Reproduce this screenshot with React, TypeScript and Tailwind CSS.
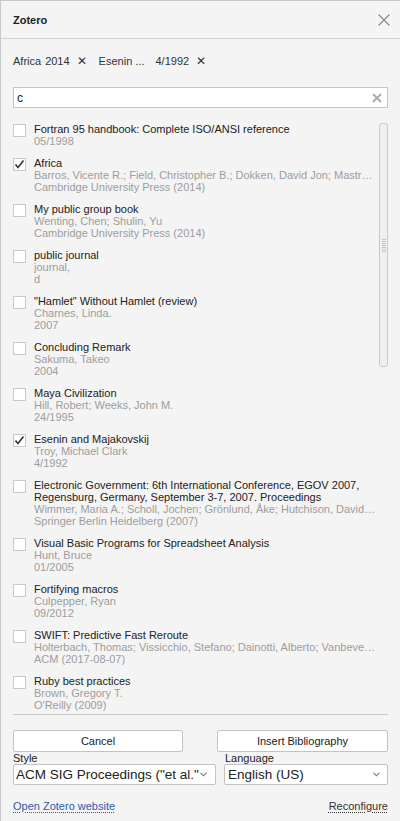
import React from "react";

const items = [
  { title: "Fortran 95 handbook: Complete ISO/ANSI reference", lines: ["05/1998"] },
  {
    title: "Africa",
    lines: ["Barros, Vicente R.; Field, Christopher B.; Dokken, David Jon; Mastrandrea, Michael D.", "Cambridge University Press (2014)"],
    checked: true,
  },
  { title: "My public group book", lines: ["Wenting, Chen; Shulin, Yu", "Cambridge University Press (2014)"] },
  { title: "public journal", lines: ["journal,", "d"] },
  { title: "\"Hamlet\" Without Hamlet (review)", lines: ["Charnes, Linda.", "2007"] },
  { title: "Concluding Remark", lines: ["Sakuma, Takeo", "2004"] },
  { title: "Maya Civilization", lines: ["Hill, Robert; Weeks, John M.", "24/1995"] },
  { title: "Esenin and Majakovskij", lines: ["Troy, Michael Clark", "4/1992"], checked: true },
  {
    title: "Electronic Government: 6th International Conference, EGOV 2007, Regensburg, Germany, September 3-7, 2007. Proceedings",
    lines: ["Wimmer, Maria A.; Scholl, Jochen; Grönlund, Åke; Hutchison, David; Kanade, Takeo", "Springer Berlin Heidelberg (2007)"],
  },
  { title: "Visual Basic Programs for Spreadsheet Analysis", lines: ["Hunt, Bruce", "01/2005"] },
  { title: "Fortifying macros", lines: ["Culpepper, Ryan", "09/2012"] },
  {
    title: "SWIFT: Predictive Fast Reroute",
    lines: ["Holterbach, Thomas; Vissicchio, Stefano; Dainotti, Alberto; Vanbever, Laurent", "ACM (2017-08-07)"],
  },
  { title: "Ruby best practices", lines: ["Brown, Gregory T.", "O'Reilly (2009)"] },
];

const Checkbox = ({ checked }: { checked?: boolean }) => (
  <div className="mt-[1px] w-[13px] h-[13px] shrink-0 bg-white border border-[#c9c9c9] flex items-center justify-center">
    {checked && (
      <svg width="11" height="11" viewBox="0 0 11 11">
        <path d="M1.5 5.5 L4 8.5 L9.5 1.5" fill="none" stroke="#333" strokeWidth="1.6" />
      </svg>
    )}
  </div>
);

const Chevron = () => (
  <svg width="7" height="5" viewBox="0 0 7 5" className="shrink-0">
    <path d="M0.5 0.8 L3.5 3.8 L6.5 0.8" fill="none" stroke="#777" strokeWidth="1.1" />
  </svg>
);

const App: React.FC = () => {
  return (
    <div className="w-[400px] h-[821px] bg-[#f4f4f4] border-l border-t border-[#c8c8c8] flex flex-col text-[11px] leading-[12px] text-[#222] font-['Liberation_Sans',Arial,sans-serif] overflow-hidden">
      <div className="h-[38px] shrink-0 px-3 flex items-center justify-between border-b border-[#cfcfcf]">
        <span className="font-bold text-[11px] text-[#222]">Zotero</span>
        <svg width="12" height="12" viewBox="0 0 12 12" className="mr-[-2px]">
          <path d="M0.5 0.5 L11.5 11.5 M11.5 0.5 L0.5 11.5" stroke="#888" strokeWidth="1.1" />
        </svg>
      </div>

      <div className="px-3 flex flex-col">
        <div className="mt-4 flex items-center h-[12px] text-[#333]">
          <span>Africa</span>
          <span className="ml-[4px]">2014</span>
          <span className="ml-[7px] text-[12px]">✕</span>
          <span className="ml-[12px]">Esenin ...</span>
          <span className="ml-[11px]">4/1992</span>
          <span className="ml-[7px] text-[12px]">✕</span>
        </div>

        <div className="mt-5 h-[21px] bg-white border border-[#c6c6c6] flex items-center justify-between pl-[3px] pr-[5px]">
          <span className="text-[12px] text-[#222]">c</span>
          <svg width="10" height="10" viewBox="0 0 10 10">
            <path d="M1 1 L9 9 M9 1 L1 9" stroke="#aaa" strokeWidth="1.8" />
          </svg>
        </div>

        <div className="relative mt-[15px] h-[591px] overflow-hidden pr-[11px]">
          <div className="flex flex-col gap-[10px]">
            {items.map((item, i) => (
              <div key={i} className="flex gap-[8px]">
                <Checkbox checked={item.checked} />
                <div className="min-w-0 flex-1">
                  <div className="text-[#222]">{item.title}</div>
                  {item.lines.map((l, j) => (
                    <div key={j} className="text-[#9d9d9d] truncate">
                      {l}
                    </div>
                  ))}
                </div>
              </div>
            ))}
          </div>
          <div className="absolute right-0 top-0 w-[9px] h-[244px] bg-[#f0f0f0] border border-[#c9c9c9] rounded-[3px] flex flex-col items-center justify-center gap-[1px]">
            {[0, 1, 2, 3, 4, 5, 6].map((k) => (
              <div key={k} className="w-[4px] h-[1px] bg-[#c4c4c4]" />
            ))}
          </div>
        </div>

        <div className="border-t border-[#c8c8c8]" />

        <div className="mt-[15px] flex justify-between">
          <button className="w-[170px] h-[22px] bg-white border border-[#c3c3c3] rounded-[2px] text-[11px] text-[#222]">
            Cancel
          </button>
          <button className="w-[171px] h-[22px] bg-white border border-[#c3c3c3] rounded-[2px] text-[11px] text-[#222]">
            Insert Bibliography
          </button>
        </div>

        <div className="flex justify-between">
          <div className="w-[203px] flex flex-col">
            <span className="h-[12px] text-[#222]">Style</span>
            <div className="h-[21px] bg-white border border-[#c3c3c3] rounded-[2px] flex items-center justify-between pl-[2px] pr-[8px]">
              <span className="text-[13.5px] leading-[16px] whitespace-nowrap overflow-hidden">ACM SIG Proceedings ("et al."</span>
              <Chevron />
            </div>
          </div>
          <div className="w-[164px] flex flex-col">
            <span className="h-[12px] pl-[1px] text-[#222]">Language</span>
            <div className="h-[21px] bg-white border border-[#c3c3c3] rounded-[2px] flex items-center justify-between pl-[3px] pr-[7px]">
              <span className="text-[13.5px] leading-[16px]">English (US)</span>
              <Chevron />
            </div>
          </div>
        </div>

        <div className="mt-[15px] flex justify-between h-[14px]">
          <span className="text-[#2f5aa8] underline decoration-dotted underline-offset-2">Open Zotero website</span>
          <span className="text-[#333] underline decoration-dotted underline-offset-2">Reconfigure</span>
        </div>
      </div>
    </div>
  );
};

export default App;
